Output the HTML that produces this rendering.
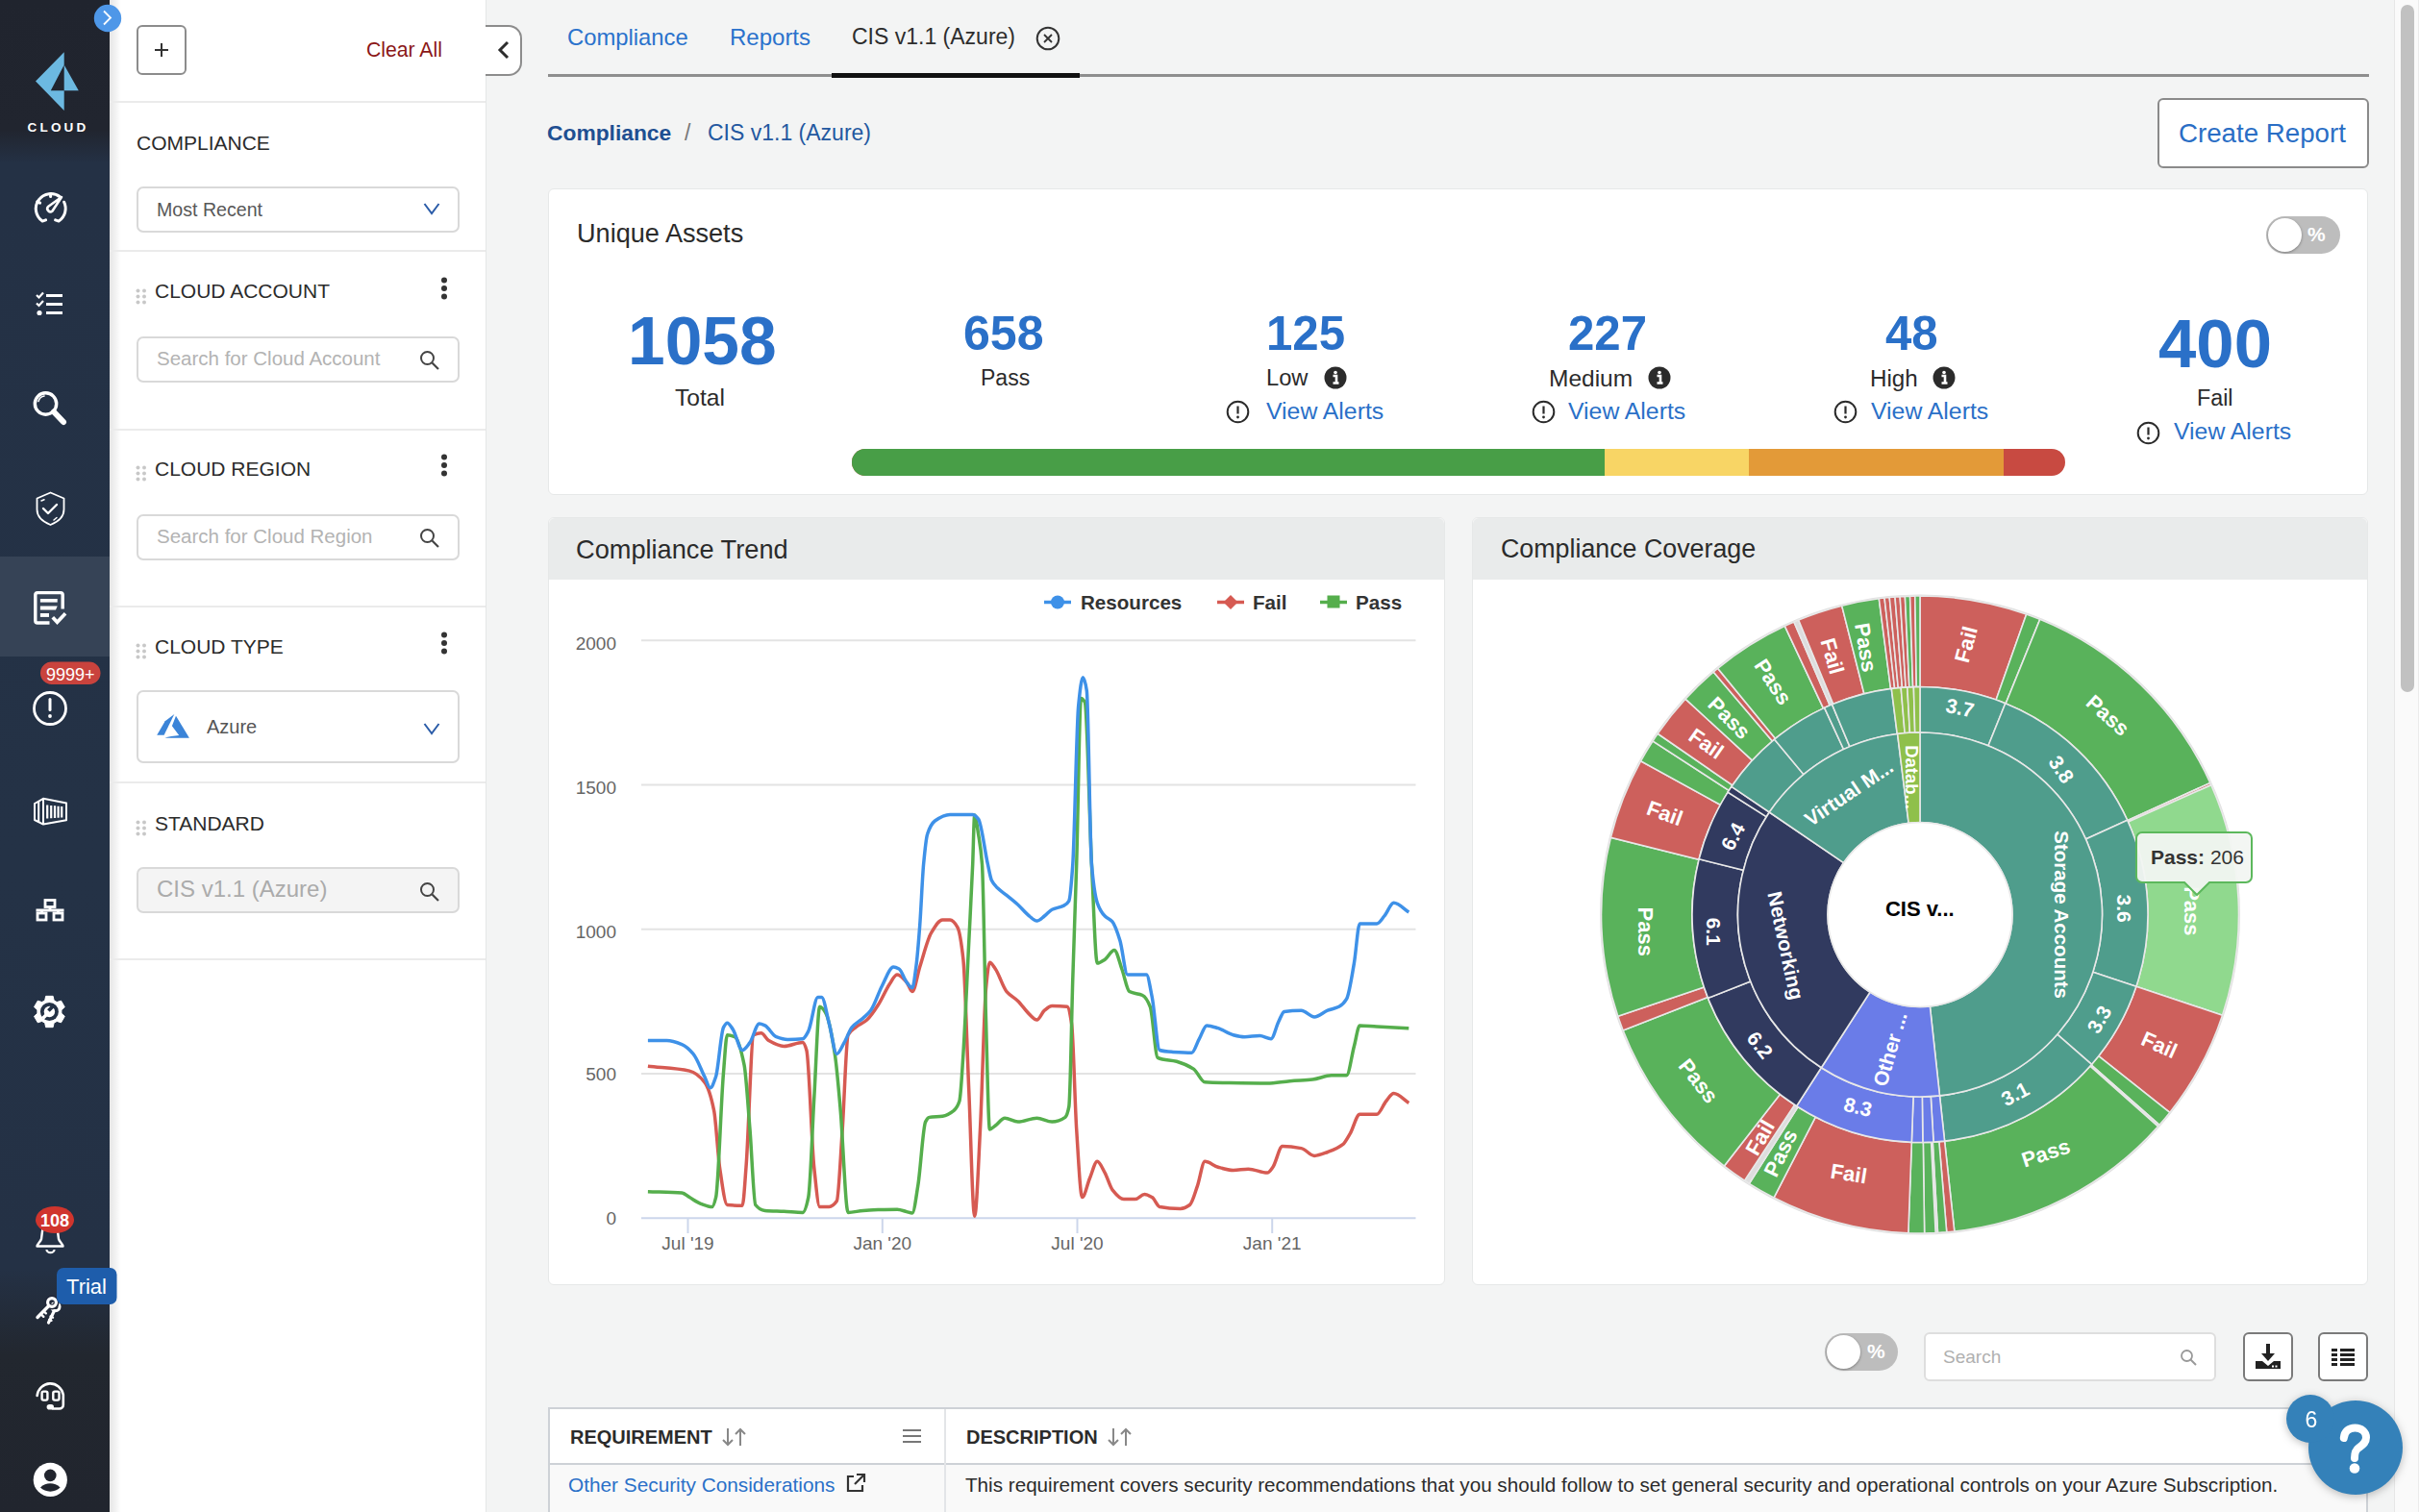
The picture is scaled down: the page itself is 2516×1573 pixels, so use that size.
<!DOCTYPE html>
<html><head><meta charset="utf-8">
<style>
*{box-sizing:border-box;margin:0;padding:0}
html,body{width:2516px;height:1573px;overflow:hidden;background:#f3f4f4;font-family:"Liberation Sans",sans-serif;color:#333}
.a{position:absolute;white-space:nowrap}
#sb{position:absolute;left:0;top:0;width:114px;height:1573px;background:linear-gradient(to bottom,#20242e 0px,#21252f 135px,#243145 170px,#243246 900px,#243145 1320px,#22272f 1410px,#21252e 1573px)}
#fp{position:absolute;left:114px;top:0;width:392px;height:1573px;background:#fff;border-right:1px solid #e4e6e6}
#fpshadow{position:absolute;left:114px;top:0;width:12px;height:1573px;background:linear-gradient(to right,rgba(0,0,0,0.10),rgba(0,0,0,0))}
.div{position:absolute;left:114px;width:391px;height:2px;background:#ebebeb}
.inp{position:absolute;left:142px;width:336px;height:48px;border:2px solid #d9d9d9;border-radius:7px;background:#fff}
.hd{font-size:21px;color:#2b2b2b}
.ph{font-size:20.5px;color:#b3b3b3}
.blue{color:#2a70c8}
.card{position:absolute;background:#fff;border:1px solid #e6e8e8;border-radius:6px}
.chd{position:absolute;background:#e9ebeb;border-radius:6px 6px 0 0}
</style></head><body>

<div id="sb"></div>
<svg class="a" style="left:0;top:0;z-index:5" width="130" height="1573" viewBox="0 0 130 1573">
  <!-- active row -->
  <rect x="0" y="579" width="114" height="104" fill="#364356"/>
  <!-- logo -->
  <polygon points="66.7,54.3 37,84.5 66.7,115 66.7,94.3 52.8,94.3 66.7,67.5" fill="#6cb9e1"/>
  <polygon points="66.7,67.5 81.8,94.3 66.7,94.3" fill="#6cb9e1"/>
  <text x="60.5" y="137" font-family="Liberation Sans" font-weight="bold" font-size="13.5" fill="#fff" text-anchor="middle" letter-spacing="3.2">CLOUD</text>
  <!-- gauge -->
  <g fill="none" stroke="#fff" stroke-width="3" stroke-linecap="round" stroke-linejoin="round">
    <path d="M47.6,228.9 L44.1,230.1 A15.6,15.6 0 1 1 62.6,205.0"/>
    <path d="M66.6,210.2 A15.6,15.6 0 0 1 61.1,230.1 L57.6,228.9"/>
    <path d="M52.6,201.4 v3.2"/>
    <path d="M38.8,209.7 l2.8,1.4"/>
    <path d="M64,205 L54.5,219.5 A3.2,3.2 0 0 1 50,215 Z" stroke-width="2.6"/>
  </g>
  <!-- checklist -->
  <g stroke="#fff" stroke-width="3.2" fill="none" stroke-linecap="butt">
    <path d="M48,307.5 h17 M48,316.5 h17 M48,325.5 h17"/>
    <path d="M38,307 l2.5,2.5 l4.5,-5" stroke-width="2.2"/>
    <path d="M38,315.5 l2.5,2.5 l4.5,-5" stroke-width="2.2"/>
  </g>
  <circle cx="41" cy="325.5" r="2.6" fill="#fff"/>
  <!-- magnifier -->
  <circle cx="47.5" cy="420" r="11.2" fill="none" stroke="#fff" stroke-width="3.4"/>
  <path d="M40,417.5 a7.5,7.5 0 0 1 6,-5.5" fill="none" stroke="#fff" stroke-width="1.6" stroke-linecap="round"/>
  <path d="M56,428.5 L66,439" stroke="#fff" stroke-width="6" stroke-linecap="round"/>
  <!-- shield -->
  <path d="M52.5,512.5 L66.5,518.5 L66.5,530 C66.5,538 60,543 52.5,546 C45,543 38.5,538 38.5,530 L38.5,518.5 Z" fill="none" stroke="#fff" stroke-width="1.8" stroke-linejoin="round"/>
  <path d="M45,529 l5,5 l9,-9" fill="none" stroke="#fff" stroke-width="2.4" stroke-linecap="round" stroke-linejoin="round"/>
  <path d="M43,521 l3,-1.3 M56,541 l3,-2.5" stroke="#fff" stroke-width="1.5" stroke-linecap="round"/>
  <!-- report doc -->
  <path d="M51.5,648 H39 A2.2,2.2 0 0 1 36.8,645.8 V618.8 A2.2,2.2 0 0 1 39,616.6 H63 A2.2,2.2 0 0 1 65.2,618.8 V633.5" fill="none" stroke="#fff" stroke-width="3.4"/>
  <rect x="41.9" y="623" width="17.8" height="3.6" fill="#fff"/>
  <path d="M41.9,630.6 H59.7 L58,634.5 H41.9 Z" fill="#fff"/>
  <rect x="41.9" y="638" width="9.1" height="3.9" fill="#fff"/>
  <path d="M56,643.5 L59.5,647.3 L66.8,639.5" fill="none" stroke="#fff" stroke-width="3.6" stroke-linecap="square"/>
  <!-- alert badge -->
  <rect x="42" y="688.5" width="62.5" height="23.5" rx="11.75" fill="#c9433d"/>
  <text x="73.3" y="707.5" font-family="Liberation Sans" font-size="18" fill="#fff" text-anchor="middle">9999+</text>
  <circle cx="52" cy="737" r="16.5" fill="none" stroke="#fff" stroke-width="2.8"/>
  <path d="M52,727.5 v11" stroke="#fff" stroke-width="3" stroke-linecap="round"/>
  <circle cx="52" cy="745" r="1.9" fill="#fff"/>
  <!-- container -->
  <g fill="none" stroke="#fff" stroke-width="2" stroke-linejoin="round">
    <path d="M36,836 L45,830.8 L69,835.4 V853.2 L45,857.6 L36,853 Z"/>
    <path d="M45,830.8 V857.6 M40.2,834 V855.2"/>
    <path d="M49.2,837.6 v14 M53.2,837.9 v13.4 M57,838.3 v12.8 M60.6,838.7 v12 M64.2,839.1 v11.4" stroke-width="2.2"/>
  </g>
  <!-- network -->
  <g fill="none" stroke="#fff" stroke-width="2.8">
    <rect x="47" y="936.5" width="10" height="7"/>
    <rect x="39" y="950" width="9" height="7"/>
    <rect x="56" y="950" width="9" height="7"/>
    <path d="M52,943.5 v3.5 M37.5,947 h29 M43.5,947 v3 M60.5,947 v3"/>
  </g>
  <!-- gear -->
  <g transform="translate(51.4,1052.5)">
    <path fill="#fff" stroke="#fff" stroke-width="1" stroke-linejoin="round" d="M-4.72,-11.68 L-3.73,-16.17 L3.73,-16.17 L4.72,-11.68 L7.76,-9.93 L12.14,-11.32 L15.87,-4.85 L12.48,-1.75 L12.48,1.75 L15.87,4.85 L12.14,11.32 L7.76,9.93 L4.72,11.68 L3.73,16.17 L-3.73,16.17 L-4.72,11.68 L-7.76,9.93 L-12.14,11.32 L-15.87,4.85 L-12.48,1.75 L-12.48,-1.75 L-15.87,-4.85 L-12.14,-11.32 L-7.76,-9.93 Z"/>
    <circle r="9.5" fill="#243246"/>
    <circle r="5.7" fill="#fff"/>
    <path d="M-1,-1 L5,-7" stroke="#243246" stroke-width="3.8"/>
    <path d="M-1,1 L-7,7" stroke="#fff" stroke-width="3.6"/>
  </g>
  <!-- bell -->
  <path d="M38.5,1296.5 C38.5,1294.5 42,1292 43,1289 L44,1281 C44.5,1277 48,1275 52,1275 C56,1275 59.5,1277 60,1281 L61,1289 C62,1292 65.5,1294.5 65.5,1296.5 Z" fill="none" stroke="#fff" stroke-width="2.4" stroke-linejoin="round"/>
  <path d="M48.5,1300 a4,3.2 0 0 0 8,0" fill="none" stroke="#fff" stroke-width="2.2"/>
  <ellipse cx="57" cy="1269" rx="20" ry="14" fill="#d0352d"/>
  <text x="57" y="1275.5" font-family="Liberation Sans" font-weight="bold" font-size="18" fill="#fff" text-anchor="middle">108</text>
  <!-- keys -->
  <g fill="none" stroke="#fff" stroke-linecap="round" stroke-linejoin="round">
    <circle cx="57.8" cy="1359.5" r="4.2" stroke-width="3"/>
    <path d="M56.5,1363.5 L50.5,1376" stroke-width="3.2"/>
    <path d="M52.5,1369.5 l2.6,1.2 M51.2,1372.8 l2.4,1.1" stroke-width="2.2"/>
    <circle cx="54" cy="1355" r="4.6" stroke="#22283a" stroke-width="6"/>
    <circle cx="54" cy="1355" r="4.4" stroke-width="3.2"/>
    <path d="M50.8,1358.5 L39,1370.5" stroke-width="3.4"/>
    <path d="M42.5,1367 l2.8,2.8 M45.5,1364 l2.3,2.3" stroke-width="2.4"/>
  </g>
  <rect x="59" y="1319" width="62.5" height="38" rx="7" fill="#1e5dab"/>
  <text x="90" y="1345.5" font-family="Liberation Sans" font-size="22" fill="#fff" text-anchor="middle">Trial</text>
  <!-- headset -->
  <g fill="none" stroke="#fff" stroke-linecap="round" stroke-linejoin="round">
    <path d="M38.6,1452 A13.8,14.5 0 0 1 65.8,1451 V1461.5 A4,4 0 0 1 61.8,1465.5 H55" stroke-width="2.6"/>
    <rect x="43.6" y="1447.6" width="5.8" height="9" rx="1.6" stroke-width="2.4"/>
    <rect x="55.3" y="1447.6" width="6.2" height="9" rx="1.6" stroke-width="2.4"/>
  </g>
  <rect x="48.6" y="1461" width="7.4" height="5.6" rx="2.8" fill="#fff"/>
  <!-- user -->
  <circle cx="52.3" cy="1539.4" r="17.6" fill="#fff"/>
  <circle cx="52.3" cy="1534.9" r="6.3" fill="#21252e"/>
  <path d="M42,1547.6 C45,1544.6 48.5,1543.3 52.3,1543.3 C56.1,1543.3 59.6,1544.6 62.6,1547.6 C60,1550.3 56.3,1551.7 52.3,1551.7 C48.3,1551.7 44.6,1550.3 42,1547.6 Z" fill="#21252e"/>
</svg>

<div id="fp"></div>
<div id="fpshadow"></div>
<!-- expand circle -->
<svg class="a" style="left:97px;top:4px" width="30" height="30" viewBox="0 0 30 30">
  <circle cx="15" cy="15" r="14.2" fill="#4e97e8"/>
  <path d="M11,7.5 L18,14.5 L11,21.5" fill="none" stroke="#fff" stroke-width="1.8"/>
</svg>

<!-- filter panel content -->
<div class="a" style="left:142px;top:26px;width:52px;height:52px;border:2.5px solid #8c8c8c;border-radius:6px;background:#fff"></div>
<svg class="a" style="left:160px;top:44px" width="16" height="16"><path d="M8,1v14M1,8h14" stroke="#333" stroke-width="2"/></svg>
<div class="a" style="left:381px;top:40px;font-size:21.2px;color:#8b1717">Clear All</div>
<div class="div" style="top:104.5px"></div>

<div class="a hd" style="left:142px;top:137px">COMPLIANCE</div>
<div class="inp" style="top:194px"></div>
<div class="a" style="left:163px;top:207px;font-size:19.6px;color:#585858">Most Recent</div>
<svg class="a" style="left:440px;top:210px" width="18" height="14"><path d="M1.5,2 L9,12 L16.5,2" fill="none" stroke="#2b5ca8" stroke-width="2"/></svg>
<div class="div" style="top:259.5px"></div>

<svg class="a" style="left:141px;top:300px" width="12" height="17"><g fill="#c8c8c8"><circle cx="2.5" cy="2.5" r="2"/><circle cx="9" cy="2.5" r="2"/><circle cx="2.5" cy="8.5" r="2"/><circle cx="9" cy="8.5" r="2"/><circle cx="2.5" cy="14.5" r="2"/><circle cx="9" cy="14.5" r="2"/></g></svg>
<div class="a hd" style="left:161px;top:291px;font-size:21px">CLOUD ACCOUNT</div>
<svg class="a" style="left:456px;top:288px" width="12" height="25"><g fill="#333"><circle cx="6" cy="3.5" r="3"/><circle cx="6" cy="12" r="3"/><circle cx="6" cy="20.5" r="3"/></g></svg>
<div class="inp" style="top:350px"></div>
<div class="a ph" style="left:163px;top:361px">Search for Cloud Account</div>
<svg class="a" style="left:436px;top:364px" width="22" height="22"><circle cx="8.5" cy="8.5" r="6.5" fill="none" stroke="#444" stroke-width="2"/><path d="M13.5,13.5 L20,20" stroke="#444" stroke-width="2.2"/></svg>
<div class="div" style="top:445.5px"></div>

<svg class="a" style="left:141px;top:484px" width="12" height="17"><g fill="#c8c8c8"><circle cx="2.5" cy="2.5" r="2"/><circle cx="9" cy="2.5" r="2"/><circle cx="2.5" cy="8.5" r="2"/><circle cx="9" cy="8.5" r="2"/><circle cx="2.5" cy="14.5" r="2"/><circle cx="9" cy="14.5" r="2"/></g></svg>
<div class="a hd" style="left:161px;top:476px">CLOUD REGION</div>
<svg class="a" style="left:456px;top:472px" width="12" height="25"><g fill="#333"><circle cx="6" cy="3.5" r="3"/><circle cx="6" cy="12" r="3"/><circle cx="6" cy="20.5" r="3"/></g></svg>
<div class="inp" style="top:535px"></div>
<div class="a ph" style="left:163px;top:546px">Search for Cloud Region</div>
<svg class="a" style="left:436px;top:549px" width="22" height="22"><circle cx="8.5" cy="8.5" r="6.5" fill="none" stroke="#444" stroke-width="2"/><path d="M13.5,13.5 L20,20" stroke="#444" stroke-width="2.2"/></svg>
<div class="div" style="top:629.5px"></div>

<svg class="a" style="left:141px;top:669px" width="12" height="17"><g fill="#c8c8c8"><circle cx="2.5" cy="2.5" r="2"/><circle cx="9" cy="2.5" r="2"/><circle cx="2.5" cy="8.5" r="2"/><circle cx="9" cy="8.5" r="2"/><circle cx="2.5" cy="14.5" r="2"/><circle cx="9" cy="14.5" r="2"/></g></svg>
<div class="a hd" style="left:161px;top:661px">CLOUD TYPE</div>
<svg class="a" style="left:456px;top:657px" width="12" height="25"><g fill="#333"><circle cx="6" cy="3.5" r="3"/><circle cx="6" cy="12" r="3"/><circle cx="6" cy="20.5" r="3"/></g></svg>
<div class="inp" style="top:718px;height:76px"></div>
<svg class="a" style="left:150px;top:730px" width="60" height="50" viewBox="150 730 60 50">
  <path d="M181.3,743 L171.7,750.3 L163.2,764.8 L170.6,764.8 Z" fill="#3b84d8"/>
  <path d="M183,744.8 L196.9,767.7 L171.4,767.7 C175,766.3 181,765.5 186.2,765 L178.9,755.3 Z" fill="#3b84d8"/>
</svg>
<div class="a" style="left:215px;top:745px;font-size:20px;color:#555">Azure</div>
<svg class="a" style="left:440px;top:751px" width="18" height="14"><path d="M1.5,2 L9,12 L16.5,2" fill="none" stroke="#2b5ca8" stroke-width="2"/></svg>
<div class="div" style="top:812.5px"></div>

<svg class="a" style="left:141px;top:853px" width="12" height="17"><g fill="#c8c8c8"><circle cx="2.5" cy="2.5" r="2"/><circle cx="9" cy="2.5" r="2"/><circle cx="2.5" cy="8.5" r="2"/><circle cx="9" cy="8.5" r="2"/><circle cx="2.5" cy="14.5" r="2"/><circle cx="9" cy="14.5" r="2"/></g></svg>
<div class="a hd" style="left:161px;top:845px">STANDARD</div>
<div class="inp" style="top:902px;background:#f4f4f4"></div>
<div class="a" style="left:163px;top:911px;font-size:24px;color:#ababab">CIS v1.1 (Azure)</div>
<svg class="a" style="left:436px;top:917px" width="22" height="22"><circle cx="8.5" cy="8.5" r="6.5" fill="none" stroke="#444" stroke-width="2"/><path d="M13.5,13.5 L20,20" stroke="#444" stroke-width="2.2"/></svg>
<div class="div" style="top:997px"></div>

<!-- collapse btn -->
<div class="a" style="left:505px;top:26px;width:38px;height:53px;border:2px solid #8c8c8c;border-left:none;border-radius:0 14px 14px 0;background:#fff"></div>
<svg class="a" style="left:517px;top:42px" width="14" height="20"><path d="M11,2 L3,10 L11,18" fill="none" stroke="#2d2d2d" stroke-width="3"/></svg>

<!--MAIN-->
<!-- tabs -->
<div class="a blue" style="left:590px;top:25px;font-size:23.8px;color:#2a72cc">Compliance</div>
<div class="a blue" style="left:759px;top:25px;font-size:24px;color:#2a72cc">Reports</div>
<div class="a" style="left:886px;top:25px;font-size:23px;color:#2d2d2d">CIS v1.1 (Azure)</div>
<svg class="a" style="left:1077px;top:27px" width="26" height="26"><circle cx="13" cy="13" r="11.3" fill="none" stroke="#333" stroke-width="2"/><path d="M9,9 L17,17 M17,9 L9,17" stroke="#333" stroke-width="1.8"/></svg>
<div class="a" style="left:570px;top:76.5px;width:1894px;height:3px;background:#8e8e8e"></div>
<div class="a" style="left:865px;top:76px;width:258px;height:4.5px;background:#111"></div>
<!-- breadcrumb -->
<div class="a" style="left:569px;top:125px;font-size:22.8px;font-weight:bold;color:#1f4f91">Compliance</div>
<div class="a" style="left:712px;top:125px;font-size:23px;color:#777">/</div>
<div class="a" style="left:736px;top:125px;font-size:23px;color:#2358a0">CIS v1.1 (Azure)</div>
<div class="a" style="left:2244px;top:102px;width:220px;height:73px;border:2px solid #8a8a8a;border-radius:6px;background:#fff"></div>
<div class="a" style="left:2266px;top:123px;font-size:27.7px;color:#2a6ec5">Create Report</div>

<!-- unique assets card -->
<div class="card" style="left:570px;top:196px;width:1893px;height:319px"></div>
<div class="a" style="left:600px;top:227px;font-size:27.1px;color:#2b2b2b">Unique Assets</div>
<div class="a" style="left:2357px;top:225px;width:77px;height:39px;border-radius:20px;background:#bdbdbd"></div>
<div class="a" style="left:2359px;top:227px;width:35px;height:35px;border-radius:50%;background:#fff;box-shadow:0 1px 3px rgba(0,0,0,.35)"></div>
<div class="a" style="left:2400px;top:232px;font-size:21px;font-weight:bold;color:#fff">%</div>

<div class="a blue" style="left:653px;top:315px;font-size:69.5px;font-weight:bold">1058</div>
<div class="a" style="left:702px;top:400px;font-size:24.6px;color:#2b2b2b">Total</div>
<div class="a blue" style="left:1002px;top:318px;font-size:50.1px;font-weight:bold">658</div>
<div class="a" style="left:1020px;top:380px;font-size:23px;color:#2b2b2b">Pass</div>

<div class="a blue" style="left:1317px;top:318px;font-size:49.2px;font-weight:bold">125</div>
<div class="a" style="left:1317px;top:380px;font-size:23.7px;color:#2b2b2b">Low</div>
<div class="a blue" style="left:1631px;top:318px;font-size:49.2px;font-weight:bold">227</div>
<div class="a" style="left:1611px;top:380px;font-size:24.5px;color:#2b2b2b">Medium</div>
<div class="a blue" style="left:1961px;top:318px;font-size:49.2px;font-weight:bold">48</div>
<div class="a" style="left:1945px;top:380px;font-size:24.2px;color:#2b2b2b">High</div>
<div class="a blue" style="left:2245px;top:317px;font-size:70.7px;font-weight:bold">400</div>
<div class="a" style="left:2285px;top:401px;font-size:23.3px;color:#2b2b2b">Fail</div>
<svg class="a" style="left:1377px;top:381px" width="24" height="24"><circle cx="12" cy="12" r="11.5" fill="#2b2b2b"/><circle cx="12" cy="6.5" r="1.8" fill="#fff"/><path d="M9.5,10 h3.5 v7 M9.5,17.5 h6" stroke="#fff" stroke-width="2.6" fill="none"/></svg><svg class="a" style="left:1714px;top:381px" width="24" height="24"><circle cx="12" cy="12" r="11.5" fill="#2b2b2b"/><circle cx="12" cy="6.5" r="1.8" fill="#fff"/><path d="M9.5,10 h3.5 v7 M9.5,17.5 h6" stroke="#fff" stroke-width="2.6" fill="none"/></svg><svg class="a" style="left:2010px;top:381px" width="24" height="24"><circle cx="12" cy="12" r="11.5" fill="#2b2b2b"/><circle cx="12" cy="6.5" r="1.8" fill="#fff"/><path d="M9.5,10 h3.5 v7 M9.5,17.5 h6" stroke="#fff" stroke-width="2.6" fill="none"/></svg><svg class="a" style="left:1275px;top:416px" width="25" height="25"><circle cx="12.5" cy="12.5" r="10.8" fill="none" stroke="#2b2b2b" stroke-width="2"/><path d="M12.5,6.5 v8" stroke="#2b2b2b" stroke-width="2.2"/><circle cx="12.5" cy="18" r="1.4" fill="#2b2b2b"/></svg><svg class="a" style="left:1593px;top:416px" width="25" height="25"><circle cx="12.5" cy="12.5" r="10.8" fill="none" stroke="#2b2b2b" stroke-width="2"/><path d="M12.5,6.5 v8" stroke="#2b2b2b" stroke-width="2.2"/><circle cx="12.5" cy="18" r="1.4" fill="#2b2b2b"/></svg><svg class="a" style="left:1907px;top:416px" width="25" height="25"><circle cx="12.5" cy="12.5" r="10.8" fill="none" stroke="#2b2b2b" stroke-width="2"/><path d="M12.5,6.5 v8" stroke="#2b2b2b" stroke-width="2.2"/><circle cx="12.5" cy="18" r="1.4" fill="#2b2b2b"/></svg><svg class="a" style="left:2222px;top:438px" width="25" height="25"><circle cx="12.5" cy="12.5" r="10.8" fill="none" stroke="#2b2b2b" stroke-width="2"/><path d="M12.5,6.5 v8" stroke="#2b2b2b" stroke-width="2.2"/><circle cx="12.5" cy="18" r="1.4" fill="#2b2b2b"/></svg>
<div class="a blue" style="left:1317px;top:414px;font-size:24.8px">View Alerts</div>
<div class="a blue" style="left:1631px;top:414px;font-size:24.8px">View Alerts</div>
<div class="a blue" style="left:1946px;top:414px;font-size:24.8px">View Alerts</div>
<div class="a blue" style="left:2261px;top:435px;font-size:24.8px">View Alerts</div>
<!-- bar -->
<div class="a" style="left:886px;top:466.5px;width:1262px;height:28px;border-radius:14px;overflow:hidden;background:#c84a41">
 <div class="a" style="left:0;top:0;width:782.5px;height:28px;background:#489e47"></div>
 <div class="a" style="left:782.5px;top:0;width:150.3px;height:28px;background:#f8d565"></div>
 <div class="a" style="left:932.8px;top:0;width:265.5px;height:28px;background:#e39a38"></div>
</div>



<!-- compliance trend card -->
<div class="card" style="left:570px;top:538px;width:933px;height:799px"></div>
<div class="chd" style="left:571px;top:539px;width:931px;height:64px"></div>
<div class="a" style="left:599px;top:556px;font-size:27.2px;color:#2b2b2b">Compliance Trend</div>
<svg class="a" style="left:0;top:0" width="2516" height="1573" viewBox="0 0 2516 1573">
<g>
<path d="M1086,626.5 H1114" stroke="#3e91e8" stroke-width="3.5"/><circle cx="1100" cy="626.5" r="7" fill="#3e91e8"/>
<path d="M1266,626.5 H1294" stroke="#d65a52" stroke-width="3.5"/><path d="M1280,619 L1287.5,626.5 L1280,634 L1272.5,626.5 Z" fill="#d65a52"/>
<path d="M1373,626.5 H1401" stroke="#55ae4c" stroke-width="3.5"/><rect x="1380.5" y="619.5" width="13" height="13" fill="#55ae4c"/>
<text x="1124" y="634" font-family="Liberation Sans" font-weight="bold" font-size="20.6" fill="#333">Resources</text>
<text x="1303" y="634" font-family="Liberation Sans" font-weight="bold" font-size="20.6" fill="#333">Fail</text>
<text x="1410" y="634" font-family="Liberation Sans" font-weight="bold" font-size="20.6" fill="#333">Pass</text>
<g font-family="Liberation Sans" font-size="19" fill="#666" text-anchor="end">
<text x="641" y="676">2000</text><text x="641" y="826">1500</text><text x="641" y="976">1000</text><text x="641" y="1124">500</text><text x="641" y="1274">0</text>
</g>
<g font-family="Liberation Sans" font-size="19" fill="#666" text-anchor="middle">
<text x="715.5" y="1300">Jul '19</text><text x="917.8" y="1300">Jan '20</text><text x="1120.5" y="1300">Jul '20</text><text x="1323.2" y="1300">Jan '21</text>
</g>
<path d="M667,666.3 H1472.5" stroke="#e3e3e3" stroke-width="2"/>
<path d="M667,816.5 H1472.5" stroke="#e3e3e3" stroke-width="2"/>
<path d="M667,966.8 H1472.5" stroke="#e3e3e3" stroke-width="2"/>
<path d="M667,1117.0 H1472.5" stroke="#e3e3e3" stroke-width="2"/>
<path d="M667,1267.2 H1472.5" stroke="#ccd6eb" stroke-width="2"/>
<path d="M715.5,1267 V1283" stroke="#ccd6eb" stroke-width="2"/>
<path d="M917.8,1267 V1283" stroke="#ccd6eb" stroke-width="2"/>
<path d="M1120.5,1267 V1283" stroke="#ccd6eb" stroke-width="2"/>
<path d="M1323.2,1267 V1283" stroke="#ccd6eb" stroke-width="2"/>
<path d="M673.9,1109.3 C688.3,1110.9 702.7,1111.0 717.1,1114.1 C722.3,1115.2 727.6,1119.3 732.8,1125.8 C736.1,1130.0 739.4,1139.5 742.6,1155.3 C744.6,1164.8 746.6,1200.9 748.5,1214.2 C751.1,1232.0 753.8,1253.2 756.4,1253.5 C761.6,1254.1 766.9,1254.3 772.1,1254.3 C773.4,1254.3 774.7,1230.6 776.0,1214.2 C778.6,1181.4 781.3,1078.0 783.9,1076.7 C786.5,1075.5 789.1,1074.8 791.7,1074.8 C794.4,1074.8 797.0,1081.1 799.6,1082.6 C804.8,1085.6 810.1,1088.5 815.3,1088.5 C821.8,1088.5 828.4,1084.6 834.9,1084.6 C836.3,1084.6 837.6,1088.2 838.9,1092.5 C841.5,1101.0 844.1,1189.4 846.7,1214.2 C848.7,1232.8 850.7,1255.5 852.6,1255.5 C855.9,1255.5 859.2,1255.5 862.4,1255.5 C865.1,1255.5 867.7,1253.4 870.3,1249.6 C872.3,1246.7 874.2,1203.2 876.2,1174.9 C878.1,1146.7 880.1,1080.6 882.1,1076.7 C884.7,1071.6 887.3,1071.0 889.9,1068.9 C893.9,1065.7 897.8,1064.5 901.7,1061.0 C905.6,1057.5 909.6,1051.4 913.5,1045.3 C917.4,1039.3 921.4,1029.5 925.3,1023.7 C927.9,1019.9 930.5,1013.9 933.1,1013.9 C936.4,1013.9 939.7,1018.1 943.0,1021.8 C944.9,1023.9 946.9,1031.6 948.8,1031.6 C951.5,1031.6 954.1,1014.2 956.7,1006.0 C960.6,993.8 964.6,977.3 968.5,970.7 C972.4,964.1 976.3,957.0 980.3,957.0 C982.9,957.0 985.5,957.0 988.1,957.0 C990.7,957.0 993.4,960.2 996.0,964.8 C997.9,968.3 999.9,980.3 1001.9,998.2 C1003.8,1016.1 1005.8,1091.2 1007.8,1135.7 C1009.7,1180.1 1011.7,1265.3 1013.7,1265.3 C1015.6,1265.3 1017.6,1212.1 1019.5,1174.9 C1021.5,1137.8 1023.5,1050.7 1025.4,1029.6 C1026.7,1015.5 1028.1,1001.3 1029.4,1001.3 C1031.3,1001.3 1033.3,1005.3 1035.3,1008.0 C1039.2,1013.5 1043.1,1027.0 1047.0,1031.6 C1051.0,1036.2 1054.9,1037.6 1058.8,1041.4 C1062.7,1045.2 1066.7,1051.6 1070.6,1055.1 C1073.2,1057.5 1075.8,1061.0 1078.5,1061.0 C1081.1,1061.0 1083.7,1053.3 1086.3,1051.2 C1088.9,1049.1 1091.6,1046.5 1094.2,1046.5 C1099.4,1046.5 1104.6,1046.7 1109.9,1047.3 C1111.5,1047.5 1113.0,1055.0 1114.6,1065.0 C1116.3,1075.7 1118.0,1148.5 1119.7,1174.9 C1121.7,1205.4 1123.6,1245.6 1125.6,1245.6 C1128.2,1245.6 1130.8,1232.2 1133.4,1226.0 C1136.1,1219.8 1138.7,1208.3 1141.3,1208.3 C1143.9,1208.3 1146.5,1215.4 1149.2,1220.1 C1151.8,1224.8 1154.4,1234.5 1157.0,1237.8 C1160.9,1242.7 1164.9,1247.6 1168.8,1247.6 C1172.7,1247.6 1176.7,1247.6 1180.6,1247.6 C1183.9,1247.6 1187.1,1242.5 1190.4,1242.5 C1193.0,1242.5 1195.6,1244.1 1198.3,1245.6 C1200.9,1247.2 1203.5,1254.9 1206.1,1255.5 C1213.3,1256.9 1220.5,1257.4 1227.7,1257.4 C1231.0,1257.4 1234.3,1255.8 1237.5,1253.5 C1240.2,1251.6 1242.8,1241.3 1245.4,1233.9 C1248.0,1226.5 1250.6,1208.3 1253.2,1208.3 C1257.8,1208.3 1262.4,1213.0 1267.0,1214.2 C1272.2,1215.7 1277.5,1217.4 1282.7,1217.4 C1287.9,1217.4 1293.2,1216.2 1298.4,1216.2 C1305.0,1216.2 1311.5,1220.1 1318.1,1220.1 C1320.0,1220.1 1322.0,1216.8 1323.9,1214.2 C1327.2,1209.9 1330.5,1192.6 1333.8,1192.6 C1340.3,1192.6 1346.9,1193.4 1353.4,1194.6 C1358.0,1195.4 1362.6,1202.4 1367.1,1202.4 C1371.7,1202.4 1376.3,1200.2 1380.9,1198.5 C1386.1,1196.6 1391.4,1194.8 1396.6,1190.7 C1399.2,1188.6 1401.8,1183.3 1404.5,1178.9 C1407.7,1173.3 1411.0,1159.2 1414.3,1159.2 C1420.2,1159.2 1426.1,1159.2 1432.0,1159.2 C1435.2,1159.2 1438.5,1149.3 1441.8,1145.5 C1444.4,1142.4 1447.0,1137.6 1449.6,1137.6 C1454.9,1137.6 1460.1,1144.2 1465.3,1147.4" fill="none" stroke="#d65a52" stroke-width="3.5" stroke-linejoin="round"/>
<path d="M673.9,1239.7 C685.7,1240.1 697.5,1240.0 709.3,1240.9 C711.9,1241.1 714.5,1244.1 717.1,1245.6 C721.0,1247.9 725.0,1250.9 728.9,1252.3 C732.8,1253.7 736.7,1255.5 740.7,1255.5 C742.0,1255.5 743.3,1250.9 744.6,1245.6 C747.2,1235.1 749.8,1147.8 752.5,1116.0 C753.8,1100.2 755.1,1076.7 756.4,1076.7 C759.0,1076.7 761.6,1077.5 764.2,1078.7 C767.5,1080.2 770.8,1091.9 774.1,1108.2 C776.0,1118.0 778.0,1150.9 780.0,1174.9 C781.9,1199.0 783.9,1251.1 785.8,1253.5 C789.1,1257.6 792.4,1259.1 795.7,1259.4 C802.2,1259.9 808.8,1259.9 815.3,1260.2 C821.8,1260.5 828.4,1261.4 834.9,1261.4 C836.9,1261.4 838.9,1254.7 840.8,1245.6 C842.8,1236.6 844.8,1176.5 846.7,1143.5 C848.7,1110.5 850.7,1047.3 852.6,1047.3 C854.6,1047.3 856.5,1050.1 858.5,1053.2 C861.8,1058.2 865.1,1075.7 868.3,1096.4 C870.3,1108.8 872.3,1132.9 874.2,1155.3 C876.8,1185.2 879.5,1261.4 882.1,1261.4 C887.3,1261.4 892.5,1259.8 897.8,1259.4 C903.0,1259.0 908.3,1258.8 913.5,1258.6 C920.0,1258.4 926.6,1258.2 933.1,1258.2 C936.4,1258.2 939.7,1259.7 943.0,1260.6 C944.9,1261.1 946.9,1262.1 948.8,1262.1 C950.8,1262.1 952.8,1245.7 954.7,1233.9 C957.4,1218.0 960.0,1172.2 962.6,1167.1 C963.9,1164.5 965.2,1162.6 966.5,1162.4 C971.1,1161.5 975.7,1161.9 980.3,1161.2 C984.2,1160.6 988.1,1158.5 992.1,1155.3 C994.0,1153.7 996.0,1151.6 997.9,1145.5 C999.3,1141.4 1000.6,1116.2 1001.9,1096.4 C1003.8,1066.6 1005.8,1018.0 1007.8,978.6 C1009.1,952.2 1010.4,929.4 1011.7,899.2 C1012.3,884.1 1013.0,848.1 1013.7,848.1 C1015.0,848.1 1016.3,859.7 1017.6,867.8 C1018.9,875.8 1020.2,881.7 1021.5,899.2 C1022.8,916.7 1024.1,1012.1 1025.4,1057.1 C1026.7,1102.1 1028.1,1174.9 1029.4,1174.9 C1031.3,1174.9 1033.3,1172.4 1035.3,1171.0 C1038.5,1168.7 1041.8,1163.2 1045.1,1163.2 C1049.7,1163.2 1054.2,1167.1 1058.8,1167.1 C1065.4,1167.1 1071.9,1163.2 1078.5,1163.2 C1083.7,1163.2 1088.9,1167.1 1094.2,1167.1 C1098.8,1167.1 1103.3,1165.6 1107.9,1162.4 C1109.2,1161.4 1110.5,1158.1 1111.8,1151.4 C1113.2,1144.6 1114.5,1059.7 1115.8,1017.8 C1117.1,976.0 1118.4,942.4 1119.7,899.2 C1121.3,847.3 1122.8,726.4 1124.4,726.4 C1125.7,726.4 1127.0,728.0 1128.3,730.3 C1130.7,734.5 1133.1,851.9 1135.4,899.2 C1137.4,938.7 1139.3,1002.1 1141.3,1002.1 C1143.9,1002.1 1146.5,999.9 1149.2,998.2 C1152.4,996.0 1155.7,988.4 1159.0,988.4 C1161.6,988.4 1164.2,1000.9 1166.8,1008.0 C1169.5,1015.2 1172.1,1030.1 1174.7,1031.6 C1179.3,1034.2 1183.9,1033.2 1188.4,1035.5 C1191.1,1036.8 1193.7,1040.9 1196.3,1047.3 C1198.9,1053.7 1201.5,1099.1 1204.1,1100.3 C1210.7,1103.3 1217.2,1102.4 1223.8,1104.2 C1229.7,1105.9 1235.6,1108.2 1241.5,1112.1 C1245.4,1114.7 1249.3,1125.6 1253.2,1125.8 C1261.8,1126.4 1270.3,1126.5 1278.8,1126.6 C1291.9,1126.8 1305.0,1127.0 1318.1,1127.0 C1325.9,1127.0 1333.8,1125.3 1341.6,1124.7 C1349.5,1124.0 1357.3,1123.9 1365.2,1123.1 C1371.7,1122.4 1378.3,1118.8 1384.8,1118.8 C1390.1,1118.8 1395.3,1118.8 1400.5,1118.8 C1403.2,1118.8 1405.8,1098.4 1408.4,1088.5 C1410.4,1081.2 1412.3,1066.9 1414.3,1066.9 C1420.2,1066.9 1426.1,1067.8 1432.0,1068.1 C1443.1,1068.7 1454.2,1069.2 1465.3,1069.7" fill="none" stroke="#55ae4c" stroke-width="3.5" stroke-linejoin="round"/>
<path d="M673.9,1082.6 C680.5,1082.6 687.0,1082.6 693.5,1082.6 C698.8,1082.6 704.0,1084.5 709.3,1086.6 C713.2,1088.1 717.1,1091.8 721.0,1096.4 C725.0,1101.0 728.9,1112.1 732.8,1120.0 C734.8,1123.9 736.7,1131.7 738.7,1131.7 C740.7,1131.7 742.6,1125.8 744.6,1120.0 C747.2,1112.1 749.8,1073.8 752.5,1068.9 C753.8,1066.4 755.1,1064.2 756.4,1064.2 C758.4,1064.2 760.3,1068.0 762.3,1070.9 C765.6,1075.6 768.8,1092.5 772.1,1092.5 C774.7,1092.5 777.3,1088.1 780.0,1084.6 C783.2,1080.3 786.5,1065.0 789.8,1065.0 C791.7,1065.0 793.7,1066.0 795.7,1066.9 C799.6,1068.8 803.5,1077.2 807.4,1078.7 C811.4,1080.2 815.3,1081.5 819.2,1081.5 C824.5,1081.5 829.7,1081.3 834.9,1080.7 C836.9,1080.5 838.9,1076.5 840.8,1072.8 C844.1,1066.7 847.4,1037.5 850.7,1037.5 C852.0,1037.5 853.3,1037.5 854.6,1037.5 C857.2,1037.5 859.8,1055.2 862.4,1065.0 C865.1,1074.7 867.7,1096.4 870.3,1096.4 C872.9,1096.4 875.5,1089.1 878.1,1084.6 C880.8,1080.1 883.4,1072.1 886.0,1068.9 C889.9,1064.1 893.9,1062.7 897.8,1059.1 C900.4,1056.7 903.0,1054.7 905.6,1051.2 C909.6,1046.0 913.5,1033.1 917.4,1025.7 C921.4,1018.3 925.3,1006.0 929.2,1006.0 C931.2,1006.0 933.1,1006.9 935.1,1008.0 C937.7,1009.4 940.3,1018.5 943.0,1021.8 C944.9,1024.2 946.9,1027.7 948.8,1027.7 C950.2,1027.7 951.5,1015.6 952.8,1006.0 C954.1,996.4 955.4,980.0 956.7,962.8 C958.0,945.7 959.3,913.2 960.6,899.2 C961.9,885.2 963.2,871.8 964.6,867.8 C967.2,859.7 969.8,856.0 972.4,854.0 C977.6,850.2 982.9,847.4 988.1,847.4 C996.0,847.4 1003.8,847.4 1011.7,847.4 C1013.7,847.4 1015.6,849.5 1017.6,852.1 C1020.9,856.3 1024.1,884.7 1027.4,899.2 C1028.7,905.0 1030.0,913.0 1031.3,915.7 C1033.3,919.8 1035.3,921.6 1037.2,923.6 C1040.5,926.9 1043.8,928.8 1047.0,931.4 C1051.0,934.6 1054.9,937.7 1058.8,941.2 C1062.7,944.8 1066.7,950.0 1070.6,953.0 C1073.2,955.1 1075.8,958.1 1078.5,958.1 C1081.1,958.1 1083.7,955.0 1086.3,953.0 C1088.9,951.1 1091.6,947.6 1094.2,946.3 C1098.1,944.4 1102.0,944.4 1106.0,942.4 C1107.9,941.4 1109.9,940.6 1111.8,937.3 C1113.2,935.1 1114.5,917.5 1115.8,899.2 C1117.7,871.8 1119.7,753.8 1121.7,734.2 C1123.2,718.6 1124.8,704.8 1126.4,704.8 C1127.7,704.8 1129.0,710.5 1130.3,718.5 C1132.0,729.0 1133.7,879.5 1135.4,899.2 C1137.4,922.0 1139.3,933.7 1141.3,939.3 C1143.9,946.8 1146.5,950.3 1149.2,953.0 C1151.8,955.8 1154.4,955.9 1157.0,958.9 C1159.6,961.9 1162.3,970.1 1164.9,978.6 C1167.5,987.0 1170.1,1013.9 1172.7,1013.9 C1179.3,1013.9 1185.8,1013.9 1192.4,1013.9 C1194.3,1013.9 1196.3,1027.6 1198.3,1037.5 C1200.9,1050.6 1203.5,1091.7 1206.1,1092.5 C1210.7,1093.9 1215.3,1094.1 1219.9,1094.4 C1226.4,1094.8 1233.0,1095.2 1239.5,1095.2 C1242.1,1095.2 1244.7,1085.4 1247.4,1080.7 C1250.0,1076.0 1252.6,1066.9 1255.2,1066.9 C1259.1,1066.9 1263.1,1068.5 1267.0,1069.7 C1272.2,1071.3 1277.5,1075.5 1282.7,1076.7 C1286.6,1077.7 1290.6,1078.7 1294.5,1078.7 C1299.7,1078.7 1305.0,1077.5 1310.2,1077.5 C1314.1,1077.5 1318.1,1080.7 1322.0,1080.7 C1324.6,1080.7 1327.2,1068.2 1329.8,1063.0 C1331.8,1059.1 1333.8,1052.7 1335.7,1052.4 C1341.6,1051.5 1347.5,1051.2 1353.4,1051.2 C1358.0,1051.2 1362.6,1057.9 1367.1,1057.9 C1371.7,1057.9 1376.3,1053.0 1380.9,1051.2 C1384.8,1049.7 1388.8,1049.3 1392.7,1047.3 C1395.3,1045.9 1397.9,1043.8 1400.5,1039.4 C1403.2,1035.1 1405.8,1017.1 1408.4,1002.1 C1410.4,990.9 1412.3,960.9 1414.3,960.9 C1420.2,960.9 1426.1,960.9 1432.0,960.9 C1434.6,960.9 1437.2,956.1 1439.8,953.0 C1443.1,949.2 1446.4,939.3 1449.6,939.3 C1454.9,939.3 1460.1,945.8 1465.3,949.1" fill="none" stroke="#3e91e8" stroke-width="3.5" stroke-linejoin="round"/>
</g>
</svg>

<!-- compliance coverage card -->
<div class="card" style="left:1531px;top:538px;width:932px;height:799px"></div>
<div class="chd" style="left:1532px;top:539px;width:930px;height:64px"></div>
<div class="a" style="left:1561px;top:556px;font-size:26.8px;color:#2b2b2b">Compliance Coverage</div>
<svg class="a" style="left:0;top:0" width="2516" height="1573" viewBox="0 0 2516 1573">
<circle cx="1997" cy="951.5" r="333.0" fill="#e0e0e0"/>
<path d="M1997.00,620.00 A331.5,331.5 0 0 1 2107.66,639.01 L2076.11,728.09 A237,237 0 0 0 1997.00,714.50 Z" fill="#cd605c" stroke="#e8e8e8" stroke-width="1.6"/>
<path d="M2107.66,639.01 A331.5,331.5 0 0 1 2121.72,644.36 L2086.17,731.91 A237,237 0 0 0 2076.11,728.09 Z" fill="#59b25b" stroke="#e8e8e8" stroke-width="1.6"/>
<path d="M2121.72,644.36 A331.5,331.5 0 0 1 2298.89,814.56 L2212.83,853.59 A237,237 0 0 0 2086.17,731.91 Z" fill="#59b25b" stroke="#e8e8e8" stroke-width="1.6"/>
<path d="M2298.89,814.56 A331.5,331.5 0 0 1 2299.84,816.67 L2213.51,855.10 A237,237 0 0 0 2212.83,853.59 Z" fill="#cd605c" stroke="#e8e8e8" stroke-width="1.6"/>
<path d="M2299.84,816.67 A331.5,331.5 0 0 1 2311.55,1056.14 L2221.88,1026.31 A237,237 0 0 0 2213.51,855.10 Z" fill="#90d98e" stroke="#e8e8e8" stroke-width="1.6"/>
<path d="M2311.55,1056.14 A331.5,331.5 0 0 1 2256.79,1157.41 L2182.74,1098.71 A237,237 0 0 0 2221.88,1026.31 Z" fill="#cd605c" stroke="#e8e8e8" stroke-width="1.6"/>
<path d="M2256.79,1157.41 A331.5,331.5 0 0 1 2246.04,1170.29 L2175.05,1107.92 A237,237 0 0 0 2182.74,1098.71 Z" fill="#59b25b" stroke="#e8e8e8" stroke-width="1.6"/>
<path d="M2246.04,1170.29 A331.5,331.5 0 0 1 2244.51,1172.02 L2173.95,1109.16 A237,237 0 0 0 2175.05,1107.92 Z" fill="#ddd" stroke="#e8e8e8" stroke-width="1.6"/>
<path d="M2244.51,1172.02 A331.5,331.5 0 0 1 2032.80,1281.06 L2022.60,1187.11 A237,237 0 0 0 2173.95,1109.16 Z" fill="#59b25b" stroke="#e8e8e8" stroke-width="1.6"/>
<path d="M2032.80,1281.06 A331.5,331.5 0 0 1 2024.74,1281.84 L2016.83,1187.67 A237,237 0 0 0 2022.60,1187.11 Z" fill="#cd605c" stroke="#e8e8e8" stroke-width="1.6"/>
<path d="M2024.74,1281.84 A331.5,331.5 0 0 1 2015.50,1282.48 L2010.23,1188.13 A237,237 0 0 0 2016.83,1187.67 Z" fill="#59b25b" stroke="#e8e8e8" stroke-width="1.6"/>
<path d="M2015.50,1282.48 A331.5,331.5 0 0 1 2013.19,1282.60 L2008.58,1188.22 A237,237 0 0 0 2010.23,1188.13 Z" fill="#ddd" stroke="#e8e8e8" stroke-width="1.6"/>
<path d="M2013.19,1282.60 A331.5,331.5 0 0 1 2001.63,1282.97 L2000.31,1188.48 A237,237 0 0 0 2008.58,1188.22 Z" fill="#59b25b" stroke="#e8e8e8" stroke-width="1.6"/>
<path d="M2001.63,1282.97 A331.5,331.5 0 0 1 1984.85,1282.78 L1988.32,1188.34 A237,237 0 0 0 2000.31,1188.48 Z" fill="#59b25b" stroke="#e8e8e8" stroke-width="1.6"/>
<path d="M1984.85,1282.78 A331.5,331.5 0 0 1 1844.96,1246.08 L1888.30,1162.10 A237,237 0 0 0 1988.32,1188.34 Z" fill="#cd605c" stroke="#e8e8e8" stroke-width="1.6"/>
<path d="M1844.96,1246.08 A331.5,331.5 0 0 1 1819.37,1231.39 L1870.01,1151.61 A237,237 0 0 0 1888.30,1162.10 Z" fill="#59b25b" stroke="#e8e8e8" stroke-width="1.6"/>
<path d="M1819.37,1231.39 A331.5,331.5 0 0 1 1814.52,1228.25 L1866.54,1149.36 A237,237 0 0 0 1870.01,1151.61 Z" fill="#ddd" stroke="#e8e8e8" stroke-width="1.6"/>
<path d="M1814.52,1228.25 A331.5,331.5 0 0 1 1793.36,1213.08 L1851.41,1138.51 A237,237 0 0 0 1866.54,1149.36 Z" fill="#cd605c" stroke="#e8e8e8" stroke-width="1.6"/>
<path d="M1793.36,1213.08 A331.5,331.5 0 0 1 1688.14,1071.92 L1776.19,1037.59 A237,237 0 0 0 1851.41,1138.51 Z" fill="#59b25b" stroke="#e8e8e8" stroke-width="1.6"/>
<path d="M1688.14,1071.92 A331.5,331.5 0 0 1 1682.81,1057.24 L1772.38,1027.09 A237,237 0 0 0 1776.19,1037.59 Z" fill="#cd605c" stroke="#e8e8e8" stroke-width="1.6"/>
<path d="M1682.81,1057.24 A331.5,331.5 0 0 1 1675.35,871.30 L1767.04,894.16 A237,237 0 0 0 1772.38,1027.09 Z" fill="#59b25b" stroke="#e8e8e8" stroke-width="1.6"/>
<path d="M1675.35,871.30 A331.5,331.5 0 0 1 1706.50,791.80 L1789.32,837.32 A237,237 0 0 0 1767.04,894.16 Z" fill="#cd605c" stroke="#e8e8e8" stroke-width="1.6"/>
<path d="M1706.50,791.80 A331.5,331.5 0 0 1 1718.98,770.95 L1798.24,822.42 A237,237 0 0 0 1789.32,837.32 Z" fill="#59b25b" stroke="#e8e8e8" stroke-width="1.6"/>
<path d="M1718.98,770.95 A331.5,331.5 0 0 1 1724.13,763.26 L1801.92,816.92 A237,237 0 0 0 1798.24,822.42 Z" fill="#59b25b" stroke="#e8e8e8" stroke-width="1.6"/>
<path d="M1724.13,763.26 A331.5,331.5 0 0 1 1752.98,727.12 L1822.54,791.08 A237,237 0 0 0 1801.92,816.92 Z" fill="#cd605c" stroke="#e8e8e8" stroke-width="1.6"/>
<path d="M1752.98,727.12 A331.5,331.5 0 0 1 1782.15,699.05 L1843.40,771.02 A237,237 0 0 0 1822.54,791.08 Z" fill="#59b25b" stroke="#e8e8e8" stroke-width="1.6"/>
<path d="M1782.15,699.05 A331.5,331.5 0 0 1 1786.59,695.34 L1846.57,768.36 A237,237 0 0 0 1843.40,771.02 Z" fill="#cd605c" stroke="#e8e8e8" stroke-width="1.6"/>
<path d="M1786.59,695.34 A331.5,331.5 0 0 1 1856.38,651.30 L1896.46,736.88 A237,237 0 0 0 1846.57,768.36 Z" fill="#59b25b" stroke="#e8e8e8" stroke-width="1.6"/>
<path d="M1856.38,651.30 A331.5,331.5 0 0 1 1865.88,647.04 L1903.26,733.83 A237,237 0 0 0 1896.46,736.88 Z" fill="#cd605c" stroke="#e8e8e8" stroke-width="1.6"/>
<path d="M1865.88,647.04 A331.5,331.5 0 0 1 1870.68,645.01 L1906.69,732.38 A237,237 0 0 0 1903.26,733.83 Z" fill="#ddd" stroke="#e8e8e8" stroke-width="1.6"/>
<path d="M1870.68,645.01 A331.5,331.5 0 0 1 1915.68,630.13 L1938.86,721.74 A237,237 0 0 0 1906.69,732.38 Z" fill="#cd605c" stroke="#e8e8e8" stroke-width="1.6"/>
<path d="M1915.68,630.13 A331.5,331.5 0 0 1 1954.30,622.76 L1966.48,716.47 A237,237 0 0 0 1938.86,721.74 Z" fill="#59b25b" stroke="#e8e8e8" stroke-width="1.6"/>
<path d="M1954.30,622.76 A331.5,331.5 0 0 1 1960.05,622.07 L1970.58,715.98 A237,237 0 0 0 1966.48,716.47 Z" fill="#cd605c" stroke="#e8e8e8" stroke-width="1.6"/>
<path d="M1960.05,622.07 A331.5,331.5 0 0 1 1965.23,621.53 L1974.28,715.59 A237,237 0 0 0 1970.58,715.98 Z" fill="#cd605c" stroke="#e8e8e8" stroke-width="1.6"/>
<path d="M1965.23,621.53 A331.5,331.5 0 0 1 1970.99,621.02 L1978.41,715.23 A237,237 0 0 0 1974.28,715.59 Z" fill="#cd605c" stroke="#e8e8e8" stroke-width="1.6"/>
<path d="M1970.99,621.02 A331.5,331.5 0 0 1 1976.18,620.65 L1982.12,714.97 A237,237 0 0 0 1978.41,715.23 Z" fill="#cd605c" stroke="#e8e8e8" stroke-width="1.6"/>
<path d="M1976.18,620.65 A331.5,331.5 0 0 1 1981.38,620.37 L1985.84,714.76 A237,237 0 0 0 1982.12,714.97 Z" fill="#cd605c" stroke="#e8e8e8" stroke-width="1.6"/>
<path d="M1981.38,620.37 A331.5,331.5 0 0 1 1986.59,620.16 L1989.56,714.62 A237,237 0 0 0 1985.84,714.76 Z" fill="#59b25b" stroke="#e8e8e8" stroke-width="1.6"/>
<path d="M1986.59,620.16 A331.5,331.5 0 0 1 1991.79,620.04 L1993.28,714.53 A237,237 0 0 0 1989.56,714.62 Z" fill="#cd605c" stroke="#e8e8e8" stroke-width="1.6"/>
<path d="M1991.79,620.04 A331.5,331.5 0 0 1 1997.00,620.00 L1997.00,714.50 A237,237 0 0 0 1993.28,714.53 Z" fill="#59b25b" stroke="#e8e8e8" stroke-width="1.6"/>
<path d="M1997.00,714.50 A237,237 0 0 1 2085.78,731.76 L2067.99,775.80 A189.5,189.5 0 0 0 1997.00,762.00 Z" fill="#4f9d8c" stroke="#e8e8e8" stroke-width="1.6"/>
<path d="M2085.78,731.76 A237,237 0 0 1 2212.66,853.22 L2169.44,872.92 A189.5,189.5 0 0 0 2067.99,775.80 Z" fill="#4f9d8c" stroke="#e8e8e8" stroke-width="1.6"/>
<path d="M2212.66,853.22 A237,237 0 0 1 2221.88,1026.31 L2176.81,1011.32 A189.5,189.5 0 0 0 2169.44,872.92 Z" fill="#4f9d8c" stroke="#e8e8e8" stroke-width="1.6"/>
<path d="M2221.88,1026.31 A237,237 0 0 1 2175.59,1107.30 L2139.80,1076.07 A189.5,189.5 0 0 0 2176.81,1011.32 Z" fill="#4f9d8c" stroke="#e8e8e8" stroke-width="1.6"/>
<path d="M2175.59,1107.30 A237,237 0 0 1 2022.60,1187.11 L2017.47,1139.89 A189.5,189.5 0 0 0 2139.80,1076.07 Z" fill="#4f9d8c" stroke="#e8e8e8" stroke-width="1.6"/>
<path d="M2022.60,1187.11 A237,237 0 0 1 2011.06,1188.08 L2008.24,1140.67 A189.5,189.5 0 0 0 2017.47,1139.89 Z" fill="#6a7ce8" stroke="#e8e8e8" stroke-width="1.6"/>
<path d="M2011.06,1188.08 A237,237 0 0 1 1999.90,1188.48 L1999.32,1140.99 A189.5,189.5 0 0 0 2008.24,1140.67 Z" fill="#6a7ce8" stroke="#e8e8e8" stroke-width="1.6"/>
<path d="M1999.90,1188.48 A237,237 0 0 1 1988.32,1188.34 L1990.06,1140.87 A189.5,189.5 0 0 0 1999.32,1140.99 Z" fill="#6a7ce8" stroke="#e8e8e8" stroke-width="1.6"/>
<path d="M1988.32,1188.34 A237,237 0 0 1 1868.62,1150.71 L1894.35,1110.79 A189.5,189.5 0 0 0 1990.06,1140.87 Z" fill="#6a7ce8" stroke="#e8e8e8" stroke-width="1.6"/>
<path d="M1868.62,1150.71 A237,237 0 0 1 1776.49,1038.36 L1820.69,1020.95 A189.5,189.5 0 0 0 1894.35,1110.79 Z" fill="#313a5f" stroke="#e8e8e8" stroke-width="1.6"/>
<path d="M1776.49,1038.36 A237,237 0 0 1 1767.14,893.76 L1813.21,905.33 A189.5,189.5 0 0 0 1820.69,1020.95 Z" fill="#313a5f" stroke="#e8e8e8" stroke-width="1.6"/>
<path d="M1767.14,893.76 A237,237 0 0 1 1797.12,824.16 L1837.18,849.68 A189.5,189.5 0 0 0 1813.21,905.33 Z" fill="#313a5f" stroke="#e8e8e8" stroke-width="1.6"/>
<path d="M1797.12,824.16 A237,237 0 0 1 1800.98,818.29 L1840.27,844.99 A189.5,189.5 0 0 0 1837.18,849.68 Z" fill="#313a5f" stroke="#e8e8e8" stroke-width="1.6"/>
<path d="M1800.98,818.29 A237,237 0 0 1 1845.61,769.15 L1875.95,805.70 A189.5,189.5 0 0 0 1840.27,844.99 Z" fill="#4f9d8c" stroke="#e8e8e8" stroke-width="1.6"/>
<path d="M1845.61,769.15 A237,237 0 0 1 1897.59,736.36 L1917.51,779.48 A189.5,189.5 0 0 0 1875.95,805.70 Z" fill="#4f9d8c" stroke="#e8e8e8" stroke-width="1.6"/>
<path d="M1897.59,736.36 A237,237 0 0 1 1905.54,732.86 L1923.87,776.68 A189.5,189.5 0 0 0 1917.51,779.48 Z" fill="#4f9d8c" stroke="#e8e8e8" stroke-width="1.6"/>
<path d="M1905.54,732.86 A237,237 0 0 1 1967.30,716.37 L1973.25,763.49 A189.5,189.5 0 0 0 1923.87,776.68 Z" fill="#4f9d8c" stroke="#e8e8e8" stroke-width="1.6"/>
<path d="M1967.30,716.37 A237,237 0 0 1 1977.17,715.33 L1981.14,762.66 A189.5,189.5 0 0 0 1973.25,763.49 Z" fill="#8fc04b" stroke="#e8e8e8" stroke-width="1.6"/>
<path d="M1977.17,715.33 A237,237 0 0 1 1983.77,714.87 L1986.42,762.30 A189.5,189.5 0 0 0 1981.14,762.66 Z" fill="#8fc04b" stroke="#e8e8e8" stroke-width="1.6"/>
<path d="M1983.77,714.87 A237,237 0 0 1 1990.38,714.59 L1991.71,762.07 A189.5,189.5 0 0 0 1986.42,762.30 Z" fill="#8fc04b" stroke="#e8e8e8" stroke-width="1.6"/>
<path d="M1990.38,714.59 A237,237 0 0 1 1997.00,714.50 L1997.00,762.00 A189.5,189.5 0 0 0 1991.71,762.07 Z" fill="#8fc04b" stroke="#e8e8e8" stroke-width="1.6"/>
<path d="M1997.00,762.00 A189.5,189.5 0 0 1 2017.47,1139.89 L2007.37,1046.94 A96,96 0 0 0 1997.00,855.50 Z" fill="#4f9d8c" stroke="#e8e8e8" stroke-width="1.6"/>
<path d="M2017.47,1139.89 A189.5,189.5 0 0 1 1894.35,1110.79 L1945.00,1032.19 A96,96 0 0 0 2007.37,1046.94 Z" fill="#6a7ce8" stroke="#e8e8e8" stroke-width="1.6"/>
<path d="M1894.35,1110.79 A189.5,189.5 0 0 1 1840.27,844.99 L1917.60,897.54 A96,96 0 0 0 1945.00,1032.19 Z" fill="#313a5f" stroke="#e8e8e8" stroke-width="1.6"/>
<path d="M1840.27,844.99 A189.5,189.5 0 0 1 1973.58,763.45 L1985.13,856.24 A96,96 0 0 0 1917.60,897.54 Z" fill="#4f9d8c" stroke="#e8e8e8" stroke-width="1.6"/>
<path d="M1973.58,763.45 A189.5,189.5 0 0 1 1997.00,762.00 L1997.00,855.50 A96,96 0 0 0 1985.13,856.24 Z" fill="#8fc04b" stroke="#e8e8e8" stroke-width="1.6"/>
<circle cx="1997" cy="951.5" r="96" fill="#fff" stroke="#e8e8e8" stroke-width="1.6"/>
<text x="2144.0" y="951.6" transform="rotate(90 2144.0 951.6)" font-family="Liberation Sans" font-weight="bold" font-size="20.5" fill="#fff" text-anchor="middle" dominant-baseline="central">Storage Accounts</text>
<text x="1857.5" y="983.7" transform="rotate(78 1857.5 983.7)" font-family="Liberation Sans" font-weight="bold" font-size="21" fill="#fff" text-anchor="middle" dominant-baseline="central">Networking</text>
<text x="1922.9" y="824.6" transform="rotate(-34 1922.9 824.6)" font-family="Liberation Sans" font-weight="bold" font-size="21" fill="#fff" text-anchor="middle" dominant-baseline="central">Virtual M...</text>
<text x="1988.2" y="808.6" transform="rotate(90 1988.2 808.6)" font-family="Liberation Sans" font-weight="bold" font-size="18.5" fill="#fff" text-anchor="middle" dominant-baseline="central">Datab...</text>
<text x="1965.7" y="1091.4" transform="rotate(-74 1965.7 1091.4)" font-family="Liberation Sans" font-weight="bold" font-size="21" fill="#fff" text-anchor="middle" dominant-baseline="central">Other ...</text>
<text x="2038.6" y="736.2" transform="rotate(12 2038.6 736.2)" font-family="Liberation Sans" font-weight="bold" font-size="21" fill="#fff" text-anchor="middle" dominant-baseline="central">3.7</text>
<text x="2144.1" y="800.5" transform="rotate(56 2144.1 800.5)" font-family="Liberation Sans" font-weight="bold" font-size="21" fill="#fff" text-anchor="middle" dominant-baseline="central">3.8</text>
<text x="2209.5" y="945.2" transform="rotate(90 2209.5 945.2)" font-family="Liberation Sans" font-weight="bold" font-size="21" fill="#fff" text-anchor="middle" dominant-baseline="central">3.6</text>
<text x="2183.2" y="1060.4" transform="rotate(-60 2183.2 1060.4)" font-family="Liberation Sans" font-weight="bold" font-size="21" fill="#fff" text-anchor="middle" dominant-baseline="central">3.3</text>
<text x="2095.9" y="1138.0" transform="rotate(-28 2095.9 1138.0)" font-family="Liberation Sans" font-weight="bold" font-size="21" fill="#fff" text-anchor="middle" dominant-baseline="central">3.1</text>
<text x="1932.5" y="1151.4" transform="rotate(14 1932.5 1151.4)" font-family="Liberation Sans" font-weight="bold" font-size="21" fill="#fff" text-anchor="middle" dominant-baseline="central">8.3</text>
<text x="1830.7" y="1087.1" transform="rotate(52 1830.7 1087.1)" font-family="Liberation Sans" font-weight="bold" font-size="21" fill="#fff" text-anchor="middle" dominant-baseline="central">6.2</text>
<text x="1782.5" y="969.3" transform="rotate(90 1782.5 969.3)" font-family="Liberation Sans" font-weight="bold" font-size="21" fill="#fff" text-anchor="middle" dominant-baseline="central">6.1</text>
<text x="1802.3" y="870.2" transform="rotate(-62 1802.3 870.2)" font-family="Liberation Sans" font-weight="bold" font-size="21" fill="#fff" text-anchor="middle" dominant-baseline="central">6.4</text>
<text x="2045.0" y="670.4" transform="rotate(-75 2045.0 670.4)" font-family="Liberation Sans" font-weight="bold" font-size="22" fill="#fff" text-anchor="middle" dominant-baseline="central">Fail</text>
<text x="2192.3" y="744.3" transform="rotate(42 2192.3 744.3)" font-family="Liberation Sans" font-weight="bold" font-size="22" fill="#fff" text-anchor="middle" dominant-baseline="central">Pass</text>
<text x="2279.6" y="947.9" transform="rotate(90 2279.6 947.9)" font-family="Liberation Sans" font-weight="bold" font-size="22" fill="#fff" text-anchor="middle" dominant-baseline="central">Pass</text>
<text x="2245.9" y="1087.1" transform="rotate(24 2245.9 1087.1)" font-family="Liberation Sans" font-weight="bold" font-size="22" fill="#fff" text-anchor="middle" dominant-baseline="central">Fail</text>
<text x="2128.0" y="1199.6" transform="rotate(-18 2128.0 1199.6)" font-family="Liberation Sans" font-weight="bold" font-size="22" fill="#fff" text-anchor="middle" dominant-baseline="central">Pass</text>
<text x="1922.9" y="1221.0" transform="rotate(9 1922.9 1221.0)" font-family="Liberation Sans" font-weight="bold" font-size="22" fill="#fff" text-anchor="middle" dominant-baseline="central">Fail</text>
<text x="1852.1" y="1199.6" transform="rotate(-64 1852.1 1199.6)" font-family="Liberation Sans" font-weight="bold" font-size="22" fill="#fff" text-anchor="middle" dominant-baseline="central">Pass</text>
<text x="1830.7" y="1183.6" transform="rotate(-60 1830.7 1183.6)" font-family="Liberation Sans" font-weight="bold" font-size="22" fill="#fff" text-anchor="middle" dominant-baseline="central">Fail</text>
<text x="1766.4" y="1124.6" transform="rotate(52 1766.4 1124.6)" font-family="Liberation Sans" font-weight="bold" font-size="22" fill="#fff" text-anchor="middle" dominant-baseline="central">Pass</text>
<text x="1711.2" y="969.3" transform="rotate(90 1711.2 969.3)" font-family="Liberation Sans" font-weight="bold" font-size="22" fill="#fff" text-anchor="middle" dominant-baseline="central">Pass</text>
<text x="1731.6" y="846.1" transform="rotate(20 1731.6 846.1)" font-family="Liberation Sans" font-weight="bold" font-size="22" fill="#fff" text-anchor="middle" dominant-baseline="central">Fail</text>
<text x="1774.5" y="773.7" transform="rotate(35 1774.5 773.7)" font-family="Liberation Sans" font-weight="bold" font-size="22" fill="#fff" text-anchor="middle" dominant-baseline="central">Fail</text>
<text x="1798.6" y="747.0" transform="rotate(45 1798.6 747.0)" font-family="Liberation Sans" font-weight="bold" font-size="22" fill="#fff" text-anchor="middle" dominant-baseline="central">Pass</text>
<text x="1844.1" y="709.5" transform="rotate(57 1844.1 709.5)" font-family="Liberation Sans" font-weight="bold" font-size="22" fill="#fff" text-anchor="middle" dominant-baseline="central">Pass</text>
<text x="1905.7" y="682.7" transform="rotate(74 1905.7 682.7)" font-family="Liberation Sans" font-weight="bold" font-size="22" fill="#fff" text-anchor="middle" dominant-baseline="central">Fail</text>
<text x="1940.5" y="673.6" transform="rotate(81 1940.5 673.6)" font-family="Liberation Sans" font-weight="bold" font-size="22" fill="#fff" text-anchor="middle" dominant-baseline="central">Pass</text>
<text x="1996.8" y="945.2" transform="rotate(0 1996.8 945.2)" font-family="Liberation Sans" font-weight="bold" font-size="22" fill="#000" text-anchor="middle" dominant-baseline="central">CIS v...</text>
<path d="M2228,866 H2336 a6,6 0 0 1 6,6 V912 a6,6 0 0 1 -6,6 H2298 L2285,931 L2272,918 H2228 a6,6 0 0 1 -6,-6 V872 a6,6 0 0 1 6,-6 Z" fill="#f2f5f2" fill-opacity="0.95" stroke="#5cb85c" stroke-width="2"/>
<text x="2237" y="899" font-family="Liberation Sans" font-size="21" fill="#333"><tspan font-weight="bold">Pass:</tspan> 206</text>
</svg>

<!-- toolbar -->
<div class="a" style="left:1898px;top:1387px;width:76px;height:39px;border-radius:20px;background:#bdbdbd"></div>
<div class="a" style="left:1900px;top:1389px;width:35px;height:35px;border-radius:50%;background:#fff;box-shadow:0 1px 3px rgba(0,0,0,.35)"></div>
<div class="a" style="left:1942px;top:1394px;font-size:21px;font-weight:bold;color:#fff">%</div>
<div class="a" style="left:2001px;top:1386px;width:304px;height:51px;border:2px solid #dedede;border-radius:6px;background:#fff"></div>
<div class="a" style="left:2021px;top:1401px;font-size:19px;color:#b0b0b0">Search</div>
<svg class="a" style="left:2267px;top:1403px" width="19" height="19"><circle cx="7.5" cy="7.5" r="5.5" fill="none" stroke="#999" stroke-width="1.8"/><path d="M11.5,11.5 L17,17" stroke="#999" stroke-width="2"/></svg>
<div class="a" style="left:2333px;top:1386px;width:52px;height:51px;border:2px solid #7a7a7a;border-radius:6px;background:#fff"></div>
<svg class="a" style="left:2345px;top:1398px" width="28" height="28" viewBox="0 0 28 28"><path d="M12,0 h4 v10 h5 l-7,8 l-7,-8 h5 Z" fill="#222"/><path d="M1,18 h7 l6,5 l6,-5 h7 v8 h-26 Z" fill="#222"/><rect x="18" y="22.5" width="2" height="2" fill="#fff"/><rect x="21.5" y="22.5" width="2" height="2" fill="#fff"/></svg>
<div class="a" style="left:2411px;top:1386px;width:52px;height:51px;border:2px solid #7a7a7a;border-radius:6px;background:#fff"></div>
<svg class="a" style="left:2425px;top:1403px" width="24" height="18"><g fill="#222"><rect x="0" y="0" width="6" height="3"/><rect x="9" y="0" width="15" height="3"/><rect x="0" y="5" width="6" height="3"/><rect x="9" y="5" width="15" height="3"/><rect x="0" y="10" width="6" height="3"/><rect x="9" y="10" width="15" height="3"/><rect x="0" y="15" width="6" height="3"/><rect x="9" y="15" width="15" height="3"/></g></svg>

<!-- table -->
<div class="a" style="left:570px;top:1464px;width:1893px;height:120px;border:2px solid #cdd1d6;background:#fff"></div>
<div class="a" style="left:572px;top:1522px;width:1889px;height:60px;background:#f9f9f9;border-top:2px solid #cdd1d6"></div>
<div class="a" style="left:982px;top:1466px;width:2px;height:110px;background:#e3e5e8"></div>
<div class="a" style="left:593px;top:1484px;font-size:20px;font-weight:bold;color:#2b2b2b">REQUIREMENT</div>
<div class="a" style="left:1005px;top:1484px;font-size:20px;font-weight:bold;color:#2b2b2b">DESCRIPTION</div>
<svg class="a" style="left:751px;top:1485px" width="26" height="20"><g fill="none" stroke="#888" stroke-width="2"><path d="M6,1 V18 M1,13 L6,18 L11,13"/><path d="M19,19 V2 M14,7 L19,2 L24,7"/></g></svg>
<svg class="a" style="left:1152px;top:1485px" width="26" height="20"><g fill="none" stroke="#888" stroke-width="2"><path d="M6,1 V18 M1,13 L6,18 L11,13"/><path d="M19,19 V2 M14,7 L19,2 L24,7"/></g></svg>
<svg class="a" style="left:939px;top:1487px" width="19" height="14"><path d="M0,1 h19 M0,7 h19 M0,13 h19" stroke="#777" stroke-width="1.8"/></svg>
<div class="a" style="left:591px;top:1533px;font-size:20.8px;color:#2a70c8">Other Security Considerations</div>
<svg class="a" style="left:880px;top:1533px" width="21" height="20"><path d="M8,3 H2 V18 H17 V12" fill="none" stroke="#333" stroke-width="2.2"/><path d="M11,1 H19 V9 M19,1 L9,11" fill="none" stroke="#333" stroke-width="2.2"/></svg>
<div class="a" style="left:1004px;top:1533px;font-size:20.67px;color:#2b2b2b">This requirement covers security recommendations that you should follow to set general security and operational controls on your Azure Subscription.</div>

<!-- scrollbar -->
<div class="a" style="left:2490px;top:0;width:26px;height:1573px;background:#fafafa;border-left:1.5px solid #e6e6e6;border-right:1.5px solid #ececec"></div>
<div class="a" style="left:2497px;top:5px;width:14px;height:715px;border-radius:7px;background:#c1c1c1"></div>

<!-- help bubble -->
<svg class="a" style="left:2350px;top:1430px;filter:drop-shadow(0 2px 4px rgba(0,0,0,0.25))" width="166" height="143" viewBox="2350 1430 166 143">
<circle cx="2450" cy="1506" r="49" fill="#3481b9"/>
<circle cx="2403" cy="1476" r="25" fill="#3481b9"/>
<text x="2404" y="1485" font-family="Liberation Sans" font-size="23" fill="#fff" text-anchor="middle">6</text>
<path d="M2437.8,1496 C2438.5,1489 2443,1485.5 2449.5,1485.5 C2456,1485.5 2461,1489.5 2461,1495.5 C2461,1501 2457.5,1503 2453.5,1506 C2450,1508.5 2449,1511 2449,1517" fill="none" stroke="#fff" stroke-width="8" stroke-linecap="round" stroke-linejoin="round"/>
<circle cx="2449" cy="1527.5" r="5.3" fill="#fff"/>
</svg>

</body></html>
